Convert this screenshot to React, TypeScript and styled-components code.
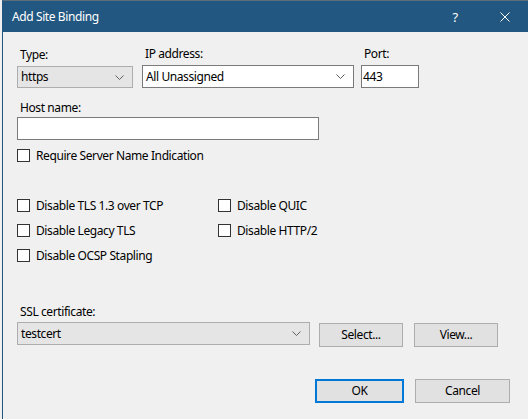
import React from "react";
import styled, { createGlobalStyle } from "styled-components";

const Global = createGlobalStyle`
  html, body { margin: 0; padding: 0; background: #f0f0f0; }
  body { width: 528px; height: 419px; overflow: hidden; }
  * { box-sizing: border-box; }
`;

const FONT = `"Noto Sans", "Segoe UI", Arial, sans-serif`;

const Window = styled.div`
  margin-left: 2px;
  width: 526px;
  height: 419px;
  border-left: 1px solid #225781;
  border-top: 1px solid #5d6d7a;
  background: #f0f0f0;
  font-family: ${FONT};
  font-size: 12px;
  letter-spacing: -0.4px;
  color: #000;
  display: flex;
  flex-direction: column;
`;

const TitleBar = styled.div`
  height: 31px;
  background: #225781;
  color: #fff;
  display: flex;
  align-items: center;
  padding-left: 9px;
  flex-shrink: 0;
`;

const Title = styled.div`
  flex: 1;
  font-size: 12px;
  line-height: 16px;
  padding-top: 1px;
`;

const TitleButton = styled.div<{ $w: number }>`
  width: ${(p) => p.$w}px;
  height: 31px;
  display: flex;
  align-items: center;
  justify-content: center;
  font-size: 13px;
`;

const Body = styled.div`
  padding: 14px 0 0 14px;
  display: flex;
  flex-direction: column;
`;

const TopRow = styled.div`
  display: grid;
  grid-template-columns: 116px 212px 58px;
  column-gap: 9px;
  & > :nth-child(3) { margin-left: -2px; }
  align-items: end;
`;

const Field = styled.div<{ $mt?: number }>`
  display: flex;
  flex-direction: column;
  margin-top: ${(p) => p.$mt ?? 0}px;
`;

const Label = styled.div<{ $gap?: number }>`
  line-height: 16px;
  padding-left: 3px;
  margin-bottom: ${(p) => p.$gap ?? 3}px;
  white-space: nowrap;
`;

const Combo = styled.div<{ $white?: boolean; $w: number; $h?: number }>`
  width: ${(p) => p.$w}px;
  height: ${(p) => p.$h ?? 22}px;
  background: ${(p) => (p.$white ? "#fff" : "#e5e5e5")};
  border: 1px solid ${(p) => (p.$white ? "#7a7a7a" : "#adadad")};
  display: flex;
  align-items: center;
  padding: 0 8px 0 3px;
  line-height: 16px;
  justify-content: space-between;
`;

const TextBox = styled.div<{ $w: number; $h?: number }>`
  width: ${(p) => p.$w}px;
  height: ${(p) => p.$h ?? 23}px;
  background: #fff;
  border: 1px solid #7a7a7a;
  display: flex;
  align-items: center;
  padding-left: 1px;
  line-height: 16px;
`;

const Chevron = () => (
  <svg width="9" height="5" viewBox="0 0 9 5">
    <polyline points="0.5,0.5 4.5,4.5 8.5,0.5" fill="none" stroke="#606060" strokeWidth="1" />
  </svg>
);

const CheckRow = styled.label<{ $mt?: number }>`
  display: flex;
  align-items: center;
  height: 13px;
  margin-top: ${(p) => p.$mt ?? 0}px;
  white-space: nowrap;
  line-height: 16px;
`;

const Box = styled.span`
  width: 13px;
  height: 13px;
  border: 1px solid #333;
  background: #fff;
  margin-right: 6px;
  flex-shrink: 0;
`;

const Options = styled.div`
  display: grid;
  grid-template-columns: 201px auto;
  grid-template-rows: 13px 13px 13px;
  row-gap: 12px;
  margin-top: 37px;
`;

const CertRow = styled.div`
  display: flex;
  align-items: flex-start;
  gap: 9px;
`;

const Button = styled.div<{ $w: number; $primary?: boolean; $mt?: number; $ml?: number }>`
  width: ${(p) => p.$w}px;
  height: 24px;
  margin-top: ${(p) => p.$mt ?? 0}px;
  margin-left: ${(p) => p.$ml ?? 0}px;
  background: #e1e1e1;
  border: ${(p) => (p.$primary ? "2px solid #0078d7" : "1px solid #adadad")};
  display: flex;
  align-items: center;
  justify-content: center;
  line-height: 16px;
`;

const Footer = styled.div`
  display: flex;
  justify-content: flex-end;
  gap: 11px;
  margin-top: 32px;
  padding-right: 18px;
`;

const Check = ({ children, mt }: { children: React.ReactNode; mt?: number }) => (
  <CheckRow $mt={mt}>
    <Box />
    {children}
  </CheckRow>
);

export default function App() {
  return (
    <>
      <Global />
      <Window>
        <TitleBar>
          <Title>Add Site Binding</Title>
          <TitleButton $w={54}>?</TitleButton>
          <TitleButton $w={46}>
            <svg width="10" height="10" viewBox="0 0 10 10">
              <path d="M0.5 0.5 L9.5 9.5 M9.5 0.5 L0.5 9.5" stroke="#fff" strokeWidth="1" />
            </svg>
          </TitleButton>
        </TitleBar>
        <Body>
          <TopRow>
            <Field>
              <Label>Type:</Label>
              <Combo $w={116}>
                https
                <Chevron />
              </Combo>
            </Field>
            <Field>
              <Label>IP address:</Label>
              <Combo $white $w={212} $h={23}>
                All Unassigned
                <Chevron />
              </Combo>
            </Field>
            <Field>
              <Label>Port:</Label>
              <TextBox $w={58}>443</TextBox>
            </Field>
          </TopRow>
          <Field $mt={12}>
            <Label $gap={1}>Host name:</Label>
            <TextBox $w={302} />
          </Field>
          <Check mt={9}>Require Server Name Indication</Check>
          <Options>
            <Check>Disable TLS 1.3 over TCP</Check>
            <Check>Disable QUIC</Check>
            <Check>Disable Legacy TLS</Check>
            <Check>Disable HTTP/2</Check>
            <Check>Disable OCSP Stapling</Check>
          </Options>
          <Field $mt={42}>
            <Label $gap={2}>SSL certificate:</Label>
            <CertRow>
              <Combo $w={293} $h={23}>
                testcert
                <Chevron />
              </Combo>
              <Button $w={84} $mt={1}>Select...</Button>
              <Button $w={84} $mt={1} $ml={2}>View...</Button>
            </CertRow>
          </Field>
          <Footer>
            <Button $w={89} $primary>OK</Button>
            <Button $w={95}>Cancel</Button>
          </Footer>
        </Body>
      </Window>
    </>
  );
}
